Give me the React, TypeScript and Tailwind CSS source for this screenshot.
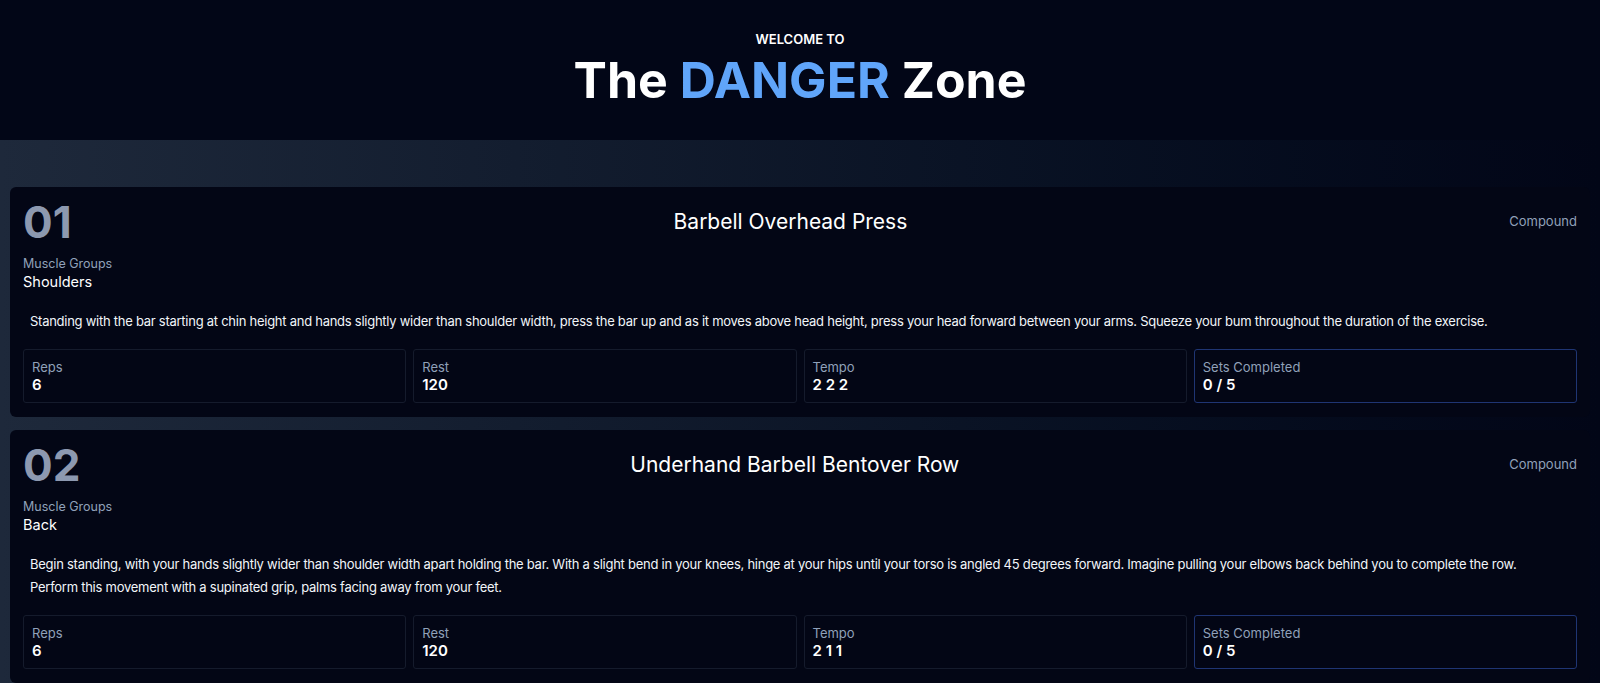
const exercises = [
  {
    num: "01",
    name: "Barbell Overhead Press",
    type: "Compound",
    muscles: "Shoulders",
    description:
      "Standing with the bar starting at chin height and hands slightly wider than shoulder width, press the bar up and as it moves above head height, press your head forward between your arms. Squeeze your bum throughout the duration of the exercise.",
    reps: "6",
    rest: "120",
    tempo: "2 2 2",
    sets: "0 / 5",
  },
  {
    num: "02",
    name: "Underhand Barbell Bentover Row",
    type: "Compound",
    muscles: "Back",
    description:
      "Begin standing, with your hands slightly wider than shoulder width apart holding the bar. With a slight bend in your knees, hinge at your hips until your torso is angled 45 degrees forward. Imagine pulling your elbows back behind you to complete the row. Perform this movement with a supinated grip, palms facing away from your feet.",
    reps: "6",
    rest: "120",
    tempo: "2 1 1",
    sets: "0 / 5",
  },
];

type Exercise = (typeof exercises)[number];

const Stat = ({ label, value, active }: { label: string; value: string; active?: boolean }) => {
  return (
    <div
      className={
        active
          ? "rounded-[3px] border border-[#1f3573] px-2 py-2"
          : "rounded-[3px] border border-[#151b2c] px-2 py-2"
      }
    >
      <p className="text-[13px] leading-[18px] text-slate-400">{label}</p>
      <p className="text-[15px] leading-[18px] font-semibold text-white">{value}</p>
    </div>
  );
};

const ExerciseCard = ({ ex }: { ex: Exercise }) => {
  return (
    <div className="mx-2.5 rounded-md bg-[#030615] px-[13px] pt-3 pb-3.5">
      {/**Top row */}
      <div className="flex items-center justify-between">
        <h2 className="text-[44px] leading-[46px] font-bold text-[#8d99b0]">{ex.num}</h2>
        <h3 className="text-[21px] text-white">{ex.name}</h3>
        <p className="text-[13px] text-slate-400">{ex.type}</p>
      </div>

      <div className="mt-[10px]">
        <p className="text-[12.5px] leading-[18px] text-slate-400">Muscle Groups</p>
        <p className="text-[14.5px] leading-[18px] text-white">{ex.muscles}</p>
      </div>

      <p className="mt-[19px] pl-[7px] pr-[50px] text-[13px] leading-[23px] tracking-[-0.02em] text-slate-100">
        {ex.description}
      </p>

      {/**Stats */}
      <div className="mt-[16px] grid grid-cols-4 gap-[7px]">
        <Stat label="Reps" value={ex.reps} />
        <Stat label="Rest" value={ex.rest} />
        <Stat label="Tempo" value={ex.tempo} />
        <Stat label="Sets Completed" value={ex.sets} active />
      </div>
    </div>
  );
};

const App = () => {
  return (
    <div className="min-h-screen bg-[#020617] font-['Inter',sans-serif]">
      {/**Header */}
      <header className="flex h-[140px] flex-col items-center bg-[#020617] pt-[30px]">
        <p className="text-[13px] leading-[18px] font-semibold text-white uppercase">Welcome to</p>
        <h1 className="mt-[7px] text-[50px] leading-[50px] font-bold text-white">
          The <span className="text-[#60a5fa]">DANGER</span> Zone
        </h1>
      </header>

      {/**Exercises */}
      <main className="flex flex-col gap-[13px] bg-gradient-to-r from-[#1e293b] to-[#020617] pt-[47px] pb-4">
        {exercises.map((ex) => (
          <ExerciseCard key={ex.num} ex={ex} />
        ))}
      </main>
    </div>
  );
};

export default App;
